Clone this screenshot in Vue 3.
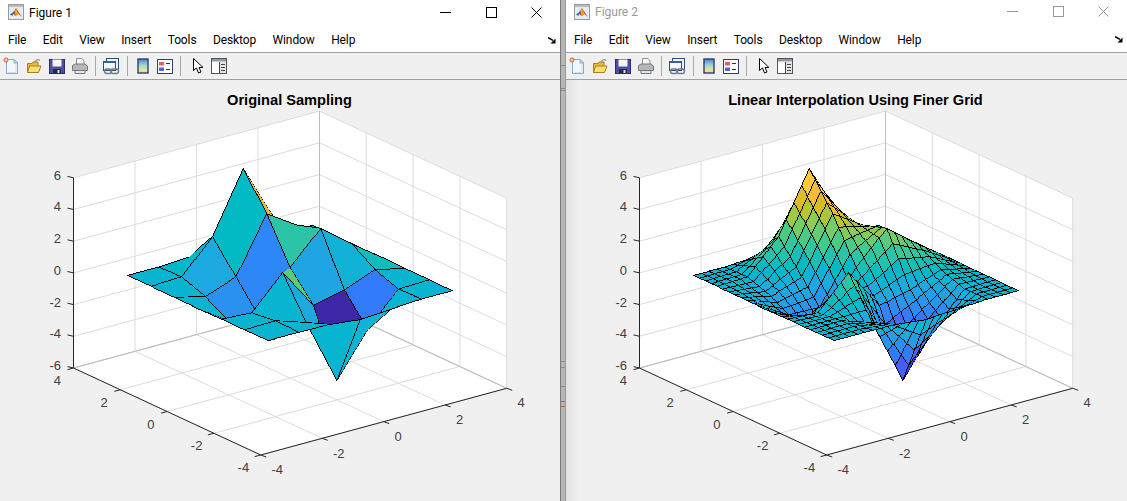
<script setup>
import { onMounted, ref } from "vue";

const figures = [
  { id: 1, name: "Figure 1", title: "Original Sampling", active: true, step: 1 },
  { id: 2, name: "Figure 2", title: "Linear Interpolation Using Finer Grid", active: false, step: 0.25 },
];
const menus = ["File", "Edit", "View", "Insert", "Tools", "Desktop", "Window", "Help"];
const notches = [65, 88, 90, 361, 367, 386];

// axes box projection, measured off the screenshot
const px = (x, y) => 260.7 + (x + 4) * 30.75 - (y + 4) * 23.4;
const py = (x, y, z) => 456 - (x + 4) * 8.34 - (y + 4) * 10.875 - (z + 6) * 15.85;
const depth = (x, y, z) => -22 * x - 28.7 * y + 6.1 * z;
const pt = (x, y, z) => `${px(x, y).toFixed(1)},${py(x, y, z).toFixed(1)}`;
const ticks = [-4, -2, 0, 2, 4];
const zticks = [-6, -4, -2, 0, 2, 4, 6];

const grid = [];
for (const t of ticks) {
  grid.push([pt(t, -4, -6), pt(t, 4, -6), pt(t, 4, 6)]);
  grid.push([pt(-4, t, -6), pt(4, t, -6), pt(4, t, 6)]);
}
for (const z of zticks) grid.push([pt(-4, 4, z), pt(4, 4, z), pt(4, -4, z)]);
const gridLines = grid.map((g) => g.join(" "));
const boxLines = [
  [pt(-4, 4, -6), pt(4, 4, -6), pt(4, -4, -6)],
  [pt(4, 4, -6), pt(4, 4, 6)],
].map((g) => g.join(" "));
const wallPoints = [pt(-4, -4, -6), pt(-4, 4, -6), pt(-4, 4, 6), pt(4, 4, 6), pt(4, -4, 6), pt(4, -4, -6)].join(" ");
const axisLine = [pt(-4, 4, 6), pt(-4, 4, -6), pt(-4, -4, -6), pt(4, -4, -6)].join(" ");
const tickMarks = [];
for (const z of zticks) tickMarks.push({ x1: px(-4, 4), y1: py(-4, 4, z), x2: px(-4, 4) - 6, y2: py(-4, 4, z) - 1.4 });
for (const t of ticks) {
  tickMarks.push({ x1: px(t, -4), y1: py(t, -4, -6), x2: px(t, -4) + 5.5, y2: py(t, -4, -6) + 2 });
  tickMarks.push({ x1: px(-4, t), y1: py(-4, t, -6), x2: px(-4, t) - 6, y2: py(-4, t, -6) + 1.6 });
}
const zLabels = zticks.map((z) => ({ t: z, x: 61, y: py(-4, 4, z) + 1.9 }));
const xLabels = ticks.map((t) => ({ t, x: px(t, -4) + (t < 0 ? 16.5 : 14.5), y: py(t, -4, -6) + 19.2 }));
const yLabels = ticks.map((t) => ({ t, x: px(-4, t) - (t < 0 ? 17.3 : 16.2), y: py(-4, t, -6) + 17.1 }));

function peaks(x, y) {
  return (
    3 * (1 - x) ** 2 * Math.exp(-(x ** 2) - (y + 1) ** 2) -
    10 * (x / 5 - x ** 3 - y ** 5) * Math.exp(-(x ** 2) - y ** 2) -
    (1 / 3) * Math.exp(-((x + 1) ** 2) - y ** 2)
  );
}

const parula = [
  [0.2422, 0.1504, 0.6603], [0.2504, 0.165, 0.7076], [0.2578, 0.1818, 0.7511], [0.2647, 0.1978, 0.7952],
  [0.2706, 0.2147, 0.8364], [0.2751, 0.2342, 0.871], [0.2783, 0.2559, 0.8991], [0.2803, 0.2782, 0.9221],
  [0.2813, 0.3006, 0.9414], [0.281, 0.3228, 0.9579], [0.2795, 0.3447, 0.9717], [0.276, 0.3667, 0.9829],
  [0.2699, 0.3892, 0.9906], [0.2602, 0.4123, 0.9952], [0.244, 0.4358, 0.9988], [0.2206, 0.4603, 0.9973],
  [0.1963, 0.4847, 0.9892], [0.1834, 0.5074, 0.9798], [0.1786, 0.5289, 0.9682], [0.1764, 0.5499, 0.952],
  [0.1687, 0.5703, 0.9359], [0.154, 0.5902, 0.9218], [0.146, 0.6091, 0.9079], [0.138, 0.6276, 0.8973],
  [0.1248, 0.6459, 0.8883], [0.1113, 0.6635, 0.8763], [0.0952, 0.6798, 0.8598], [0.0689, 0.6948, 0.8394],
  [0.0297, 0.7082, 0.8163], [0.0036, 0.7203, 0.7917], [0.0067, 0.7312, 0.766], [0.0433, 0.7411, 0.7394],
  [0.0964, 0.75, 0.712], [0.1408, 0.7584, 0.6842], [0.1717, 0.767, 0.6554], [0.1938, 0.7758, 0.6251],
  [0.2161, 0.7843, 0.5923], [0.247, 0.7918, 0.5567], [0.2906, 0.7973, 0.5188], [0.3406, 0.8008, 0.4789],
  [0.3909, 0.8029, 0.4354], [0.4456, 0.8024, 0.3909], [0.5044, 0.7993, 0.348], [0.5616, 0.7942, 0.3045],
  [0.6174, 0.7876, 0.2612], [0.672, 0.7793, 0.2227], [0.7242, 0.7698, 0.191], [0.7738, 0.7598, 0.1646],
  [0.8203, 0.7498, 0.1535], [0.8634, 0.7406, 0.1596], [0.9035, 0.733, 0.1774], [0.9393, 0.7288, 0.21],
  [0.9728, 0.7298, 0.2394], [0.9956, 0.7434, 0.2371], [0.997, 0.7659, 0.2199], [0.9952, 0.7893, 0.2028],
  [0.9892, 0.8136, 0.1885], [0.9786, 0.8386, 0.1766], [0.9676, 0.8639, 0.1643], [0.961, 0.889, 0.1537],
  [0.9597, 0.9135, 0.1423], [0.9628, 0.9373, 0.1265], [0.9691, 0.9606, 0.1064], [0.9769, 0.9839, 0.0805],
];
const zMin = peaks(0, -2);
const zMax = peaks(0, 2);
function colour(z) {
  const i = Math.floor(((z - zMin) / (zMax - zMin)) * parula.length);
  const c = parula[Math.min(parula.length - 1, Math.max(0, i))];
  return c.map((v) => Math.round(255 * v));
}

function sample(x, y) {
  const fx = Math.min(Math.floor(x), 2);
  const fy = Math.min(Math.floor(y), 2);
  const u = x - fx;
  const v = y - fy;
  return (
    peaks(fx, fy) * (1 - u) * (1 - v) + peaks(fx + 1, fy) * u * (1 - v) +
    peaks(fx, fy + 1) * (1 - u) * v + peaks(fx + 1, fy + 1) * u * v
  );
}

const W = 561;
const H = 421;
const OY = 81;

// small z-buffer so the sheet occludes itself like the real figure
function drawSurface(canvas, step) {
  const ctx = canvas.getContext("2d");
  const img = ctx.createImageData(W, H);
  const zbuf = new Float32Array(W * H).fill(-1e9);
  const put = (x, y, d, c) => {
    if (x < 0 || y < 0 || x >= W || y >= H) return;
    const k = y * W + x;
    if (d < zbuf[k]) return;
    zbuf[k] = d;
    img.data[k * 4] = c[0];
    img.data[k * 4 + 1] = c[1];
    img.data[k * 4 + 2] = c[2];
    img.data[k * 4 + 3] = 255;
  };
  const vert = (x, y) => {
    const z = sample(x, y);
    return { x: px(x, y), y: py(x, y, z) - OY, d: depth(x, y, z), z };
  };
  const tri = (a, b, c, col) => {
    const area = (b.x - a.x) * (c.y - a.y) - (c.x - a.x) * (b.y - a.y);
    if (Math.abs(area) < 1e-6) return;
    const x0 = Math.floor(Math.min(a.x, b.x, c.x));
    const x1 = Math.ceil(Math.max(a.x, b.x, c.x));
    const y0 = Math.floor(Math.min(a.y, b.y, c.y));
    const y1 = Math.ceil(Math.max(a.y, b.y, c.y));
    for (let y = y0; y <= y1; y++) {
      for (let x = x0; x <= x1; x++) {
        const p = x + 0.5;
        const q = y + 0.5;
        const w0 = ((b.x - p) * (c.y - q) - (c.x - p) * (b.y - q)) / area;
        const w1 = ((c.x - p) * (a.y - q) - (a.x - p) * (c.y - q)) / area;
        const w2 = 1 - w0 - w1;
        if (w0 < 0 || w1 < 0 || w2 < 0) continue;
        put(x, y, w0 * a.d + w1 * b.d + w2 * c.d, col);
      }
    }
  };
  const line = (a, b) => {
    const n = Math.ceil(Math.max(Math.abs(b.x - a.x), Math.abs(b.y - a.y)));
    for (let i = 0; i <= n; i++) {
      const t = n ? i / n : 0;
      put(Math.floor(a.x + (b.x - a.x) * t), Math.floor(a.y + (b.y - a.y) * t), a.d + (b.d - a.d) * t + 1.5, [0, 0, 0]);
    }
  };
  const n = Math.round(6 / step);
  const at = (i, j) => vert(-3 + i * step, -3 + j * step);
  for (let j = 0; j < n; j++) {
    for (let i = 0; i < n; i++) {
      const a = at(i, j);
      const b = at(i + 1, j);
      const c = at(i + 1, j + 1);
      const e = at(i, j + 1);
      const col = colour(a.z);
      tri(a, b, c, col);
      tri(a, c, e, col);
    }
  }
  for (let j = 0; j <= n; j++) {
    for (let i = 0; i <= n; i++) {
      if (i < n) line(at(i, j), at(i + 1, j));
      if (j < n) line(at(i, j), at(i, j + 1));
    }
  }
  ctx.putImageData(img, 0, 0);
}

const canvases = ref([]);
onMounted(() => {
  figures.forEach((f, i) => drawSurface(canvases.value[i], f.step));
});
</script>

<template>
  <div class="desktop">
    <template v-for="(fig, idx) in figures" :key="fig.id">
      <div v-if="idx" class="divider">
        <i v-for="y in notches" :key="y" class="notch" :style="{ top: y + 'px' }"></i>
        <i class="marker"></i>
      </div>
      <section class="window" :class="{ inactive: !fig.active }">
        <header class="titlebar">
          <svg class="app-icon" width="16" height="16" viewBox="0 0 16 16">
            <rect x="0.5" y="0.5" width="15" height="15" fill="#e6ecf3" stroke="#9a9a9a" />
            <rect x="1" y="1" width="14" height="2" fill="#b4bcc4" />
            <path d="M2 10.5 5 8.5 8 4 10 7 14 13 10.5 10 7.5 12 5 10Z" fill="#d9541e" />
            <path d="M2 10.5 5 8.5 6.5 6.5 7 9 5 10 4.5 12Z" fill="#2f6fb5" />
            <path d="M8 4 6.5 6.5 7 9 7.5 12 10.5 10Z" fill="#f0a030" />
          </svg>
          <span class="fig-name">{{ fig.name }}</span>
          <div class="controls">
            <svg width="11" height="11" viewBox="0 0 11 11"><path d="M0 5.5H11" /></svg>
            <svg width="11" height="11" viewBox="0 0 11 11"><rect x="0.5" y="0.5" width="10" height="10" fill="none" /></svg>
            <svg width="11" height="11" viewBox="0 0 11 11"><path d="M0.5 0.5 10.5 10.5M10.5 0.5 0.5 10.5" /></svg>
          </div>
        </header>
        <nav class="menubar">
          <span v-for="m in menus" :key="m">{{ m }}</span>
          <svg class="dock" width="8" height="7" viewBox="0 0 8 7">
            <path d="M0 .6 5 3.4" stroke="#000" stroke-width="1.6" />
            <path d="M7.5 1.5V6.5H2.5Z" fill="#000" />
          </svg>
        </nav>
        <div class="toolbar">
          <svg width="16" height="18" viewBox="0 0 16 18">
            <path d="M3.5 2.5H11L14.5 6V16.5H3.5Z" fill="#f4f8fd" stroke="#86a8d4" />
            <path d="M11 2.5V6H14.5Z" fill="#d4e2f2" stroke="#86a8d4" />
            <path d="M13 7V15.5H5" fill="none" stroke="#cfdff0" />
            <circle cx="3" cy="3" r="2" fill="#f8cfa0" stroke="#e0562a" />
          </svg>
          <svg width="16" height="16" viewBox="0 0 16 16">
            <path d="M1.5 5.5H6L7 4H12V14.5H1.5Z" fill="#e8bb3c" stroke="#a8801c" />
            <path d="M1.5 14.5 3.5 8H15L12.5 14.5Z" fill="#f8df7c" stroke="#a8801c" />
            <path d="M9 4C10 1.5 12 1 14 2.5" fill="none" stroke="#8a96a4" stroke-width="1.2" />
          </svg>
          <svg width="16" height="15" viewBox="0 0 16 15">
            <rect x="0.5" y="0.5" width="15" height="14" fill="#4d4fa8" stroke="#2c2c78" />
            <rect x="3.5" y="0.5" width="9" height="7" fill="#f4f4fa" />
            <rect x="4" y="10" width="8" height="4.5" fill="#2a2a40" />
            <rect x="8.5" y="11" width="2" height="3" fill="#dcdcdc" />
          </svg>
          <svg width="16" height="16" viewBox="0 0 16 16">
            <path d="M4.5 .5H10L12 3V7H4.5Z" fill="#f4f6f8" stroke="#8c9298" />
            <path d="M.5 7.5 3 6H13L15.5 8V12.5H.5Z" fill="#b4b8bc" stroke="#777" />
            <path d="M3 12.5H13V15.5H3Z" fill="#e4e4e4" stroke="#777" />
          </svg>
          <i class="sep"></i>
          <svg width="17" height="17" viewBox="0 0 17 17">
            <rect x="3.5" y="0.5" width="12" height="11" fill="#eef3f8" stroke="#2c4f80" />
            <rect x="0.5" y="3.5" width="12" height="9" fill="#f4f8fb" stroke="#2c4f80" />
            <rect x="1" y="3" width="11" height="2" fill="#3a6298" />
            <rect x="1.5" y="11" width="7" height="4.5" rx="2.2" fill="none" stroke="#6d7b8c" stroke-width="1.4" />
            <rect x="8" y="11" width="7.5" height="4.5" rx="2.2" fill="none" stroke="#6d7b8c" stroke-width="1.4" />
          </svg>
          <i class="sep"></i>
          <svg class="colorbar" width="12" height="16" viewBox="0 0 12 16">
            <defs>
              <linearGradient :id="'cbar' + fig.id" x1="0" y1="0" x2="0" y2="1">
                <stop offset="0" stop-color="#5a78d8" />
                <stop offset="0.45" stop-color="#9adcd4" />
                <stop offset="0.8" stop-color="#f6e08a" />
                <stop offset="1" stop-color="#f4c8a0" />
              </linearGradient>
            </defs>
            <rect x="1" y="1" width="10" height="14" :fill="'url(#cbar' + fig.id + ')'" stroke="#2a4070" stroke-width="1.4" />
          </svg>
          <svg class="legend" width="16" height="15" viewBox="0 0 16 15">
            <rect x="0.5" y="0.5" width="15" height="14" fill="#fff" stroke="#2a4070" />
            <rect x="2" y="3" width="5" height="3.5" fill="#e0606a" />
            <rect x="2" y="8.5" width="5" height="3.5" fill="#5a60d8" />
            <path d="M9 4.5H13M9 10.5H13" stroke="#333" />
          </svg>
          <i class="sep"></i>
          <svg class="pointer" width="11" height="16" viewBox="0 0 11 16">
            <path d="M.5.5V12.5L3.5 10 5.5 15 8 14 6 9.5H10Z" fill="#fff" stroke="#000" />
          </svg>
          <svg width="16" height="16" viewBox="0 0 16 16">
            <rect x="0.5" y="0.5" width="15" height="15" fill="#fff" stroke="#555" />
            <rect x="1" y="1" width="14" height="2.5" fill="#8c9aa8" />
            <rect x="8" y="4" width="7" height="11" fill="#e4e4e4" />
            <path d="M8.5 4V15M10 6.5H14M10 9.5H14M10 12.5H14" stroke="#444" />
          </svg>
        </div>
        <div class="plot">
          <svg class="axes" width="561" height="421" viewBox="0 81 561 421">
            <polygon :points="wallPoints" fill="#fff" />
            <polyline v-for="(g, i) in gridLines" :key="i" :points="g" fill="none" stroke="#dcdcdc" />
            <polyline v-for="(g, i) in boxLines" :key="'b' + i" :points="g" fill="none" stroke="#bcbcbc" />
            <polyline :points="axisLine" fill="none" stroke="#262626" />
            <line v-for="(t, i) in tickMarks" :key="'t' + i" v-bind="t" stroke="#262626" />
            <text class="title" x="289.5" y="105.5" text-anchor="middle">{{ fig.title }}</text>
            <text v-for="l in zLabels" :key="'z' + l.t" class="tick" :x="l.x" :y="l.y" text-anchor="end">{{ l.t }}</text>
            <text v-for="l in xLabels" :key="'x' + l.t" class="tick" :x="l.x" :y="l.y" text-anchor="middle">{{ l.t }}</text>
            <text v-for="l in yLabels" :key="'y' + l.t" class="tick" :x="l.x" :y="l.y" text-anchor="middle">{{ l.t }}</text>
          </svg>
          <canvas :ref="(el) => { if (el) canvases[idx] = el }" class="surface" width="561" height="421"></canvas>
        </div>
      </section>
    </template>
  </div>
</template>

<style scoped>
.desktop {
  display: flex;
  width: 1127px;
  height: 501px;
  overflow: hidden;
  background: #f0f0f0;
  font-family: Roboto, "Open Sans", sans-serif;
  font-size: 12px;
  color: #000;
}

.window {
  flex: 0 0 560px;
  display: flex;
  flex-direction: column;
  min-width: 0;
}

.window.inactive {
  flex: 0 0 561px;
  margin-top: -1px;
}

.divider {
  position: relative;
  flex: 0 0 6px;
  box-sizing: border-box;
  background: #b6b6b6;
  border-left: 1px solid #7a7a7a;
  border-right: 1px solid #9a9a9a;
}

.notch {
  position: absolute;
  left: 0;
  right: 0;
  height: 1px;
  background: #8e8e8e;
}

.marker {
  position: absolute;
  left: 0;
  right: 0;
  top: 401px;
  height: 6px;
  box-sizing: border-box;
  border-top: 1px solid #d0602c;
  border-bottom: 1px solid #d0602c;
}

.titlebar {
  display: flex;
  align-items: center;
  box-sizing: border-box;
  height: 24px;
  padding: 1px 0 0 8px;
  background: #fff;
}

.fig-name {
  margin: 1px 0 0 5px;
}

.inactive .fig-name {
  color: #999;
}

.controls {
  display: flex;
  gap: 34.5px;
  margin-left: auto;
  margin-right: 18px;
}

.controls svg {
  stroke: #000;
  fill: none;
}

.inactive .controls svg {
  stroke: #999;
}

.menubar {
  display: flex;
  align-items: center;
  gap: 16.5px;
  box-sizing: border-box;
  height: 30px;
  padding: 4px 8px 0;
  letter-spacing: -0.12px;
  background: #fff;
  border-bottom: 1px solid #a0a0a0;
}

.dock {
  margin-left: auto;
  margin-right: -3.5px;
}

.toolbar {
  display: flex;
  align-items: center;
  gap: 7px;
  box-sizing: border-box;
  height: 27px;
  padding-left: 3px;
  background: #f0f0f0;
  border-bottom: 1px solid #a0a0a0;
}

.sep {
  width: 1px;
  height: 20px;
  background: #a8a8a8;
}

.colorbar {
  margin-left: 2px;
}

.legend {
  margin-left: 1px;
}

.pointer {
  margin-left: 5px;
}

.plot {
  position: relative;
  flex: 1;
}

.inactive .plot {
  background: linear-gradient(90deg, #e2e2e2, #f0f0f0 12px);
}

.axes {
  display: block;
}

.surface {
  position: absolute;
  left: 0;
  top: 0;
}

.title {
  font-family: "Liberation Sans", sans-serif;
  font-size: 14.6px;
  font-weight: 700;
  fill: #000;
}

.tick {
  font-family: "Liberation Sans", sans-serif;
  font-size: 13px;
  fill: #404040;
}
</style>
